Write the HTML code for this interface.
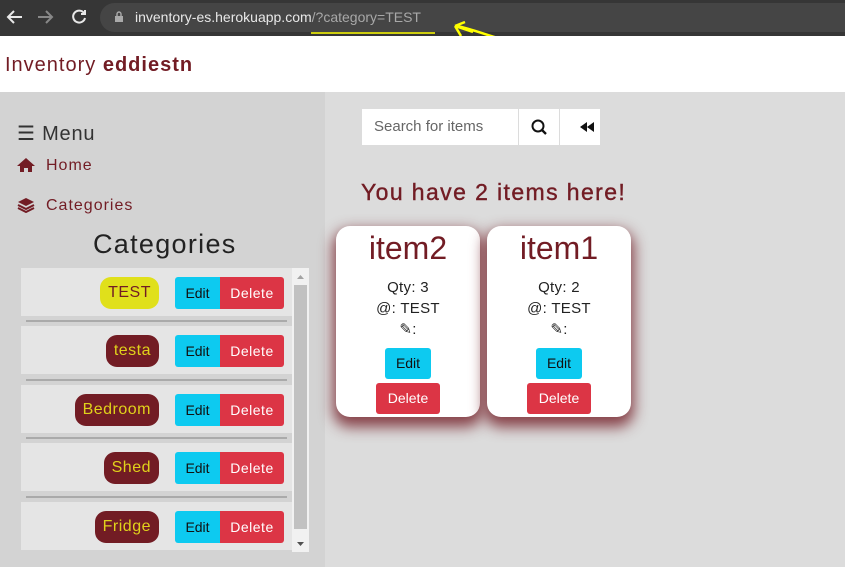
<!DOCTYPE html>
<html><head><style>
*{box-sizing:border-box;margin:0;padding:0}
body{width:845px;height:567px;overflow:hidden;font-family:"Liberation Sans",sans-serif;background:#dcdcdc;position:relative}
.abs{position:absolute}
.bar{left:0;top:0;width:845px;height:36px;background:#363636}
.pill{left:100px;top:3px;width:760px;height:29px;border-radius:15px;background:#454545}
.url{left:135px;top:9px;font-size:14px;color:#e8e8e8}
.url span{color:#a8a8a8}
.hdr{left:0;top:36px;width:845px;height:56px;background:#fff}
.side{left:0;top:92px;width:325px;height:475px;background:#d3d3d3}
.row{position:absolute;left:21px;width:271px;height:48px;background:#e5e5e5}
.hr{position:absolute;left:26px;width:261px;height:2px;background:#aaa}
.badge{position:absolute;right:133px;top:9px;height:32px;padding:0 8px;border-radius:11px;background:#721c24;color:#e0d21b;font-size:16px;line-height:32px;letter-spacing:.5px}
.ed{position:absolute;left:154px;top:9px;width:45px;height:32px;background:#0dcaf0;border-radius:3px 0 0 3px;font-size:14px;line-height:32px;text-align:center;color:#111}
.del{position:absolute;left:199px;top:9px;width:64px;height:32px;background:#dc3545;border-radius:0 3px 3px 0;font-size:14px;line-height:32px;text-align:center;color:#fff;letter-spacing:.5px}
.card{position:absolute;top:226px;width:144px;height:191px;background:#fff;border-radius:14px;box-shadow:0 7px 14px 3px rgba(114,28,36,.8);text-align:center}
.card h2{font-weight:normal;font-size:32px;color:#721c24;margin-top:2px;line-height:40px}
.card p{font-size:15px;color:#222;line-height:21px;letter-spacing:.3px}
.ce{display:inline-block;width:46px;height:31px;background:#0dcaf0;border-radius:3px;font-size:14px;line-height:31px;color:#111;margin-top:8px}
.cd{display:inline-block;width:64px;height:31px;background:#dc3545;border-radius:3px;font-size:14px;line-height:31px;color:#fff;margin-top:4px}
</style></head><body>
<div class="abs bar"></div>
<div class="abs pill"></div>
<svg class="abs" style="left:0;top:0" width="100" height="36"><g fill="none" stroke-width="2"><path d="M22 17H8M14 11l-6 6 6 6" stroke="#e8e8e8"/><path d="M38 17h14M46 11l6 6-6 6" stroke="#888"/><path d="M84 13a6 6 0 1 0 1 5" stroke="#e8e8e8"/><path d="M85 10v4h-4" stroke="#e8e8e8"/></g></svg>
<svg class="abs" style="left:114px;top:11px" width="10" height="12"><rect x="1" y="5" width="8" height="6" fill="#aaa"/><path d="M3 5V3a2 2 0 0 1 4 0v2" stroke="#aaa" fill="none" stroke-width="1.4"/></svg>
<div class="abs url">inventory-es.herokuapp.com<span>/?category=TEST</span></div>
<svg class="abs" style="left:305px;top:14px" width="220" height="30"><path d="M6 19h124" stroke="#ffff00" stroke-width="1.5"/><path d="M150 12l18 6M150 12l10-4M150 12l6 10M152 12c20 4 40 14 60 16" stroke="#ffff00" stroke-width="2.5" fill="none"/></svg>
<div class="abs hdr"></div>
<div class="abs" style="left:5px;top:54px;font-size:20px;color:#721c24;letter-spacing:1px">Inventory <b>eddiestn</b></div>
<div class="abs side"></div>
<div class="abs" style="left:17px;top:121px;font-size:20px;color:#333;letter-spacing:.8px">☰ Menu</div>
<svg class="abs" style="left:17px;top:157px" width="18" height="16"><path d="M9 1L0 9h3v6h4v-4h4v4h4V9h3z" fill="#721c24"/></svg>
<div class="abs" style="left:46px;top:157px;font-size:16px;color:#721c24;letter-spacing:1px">Home</div>
<svg class="abs" style="left:17px;top:197px" width="18" height="16"><path d="M9 1l8 4-8 4-8-4z" fill="#721c24"/><path d="M1 8l8 4 8-4M1 11l8 4 8-4" stroke="#721c24" stroke-width="2" fill="none"/></svg>
<div class="abs" style="left:46px;top:197px;font-size:16px;color:#721c24;letter-spacing:1px">Categories</div>
<div class="abs" style="left:93px;top:229px;font-size:27px;color:#222;letter-spacing:1.3px">Categories</div>
<div class="row" style="top:268px"><div class="badge" style="background:#e0e01b;color:#721c24">TEST</div><div class="ed">Edit</div><div class="del">Delete</div></div>
<div class="hr" style="top:320px"></div>
<div class="row" style="top:326px"><div class="badge">testa</div><div class="ed">Edit</div><div class="del">Delete</div></div>
<div class="hr" style="top:379px"></div>
<div class="row" style="top:385px"><div class="badge">Bedroom</div><div class="ed">Edit</div><div class="del">Delete</div></div>
<div class="hr" style="top:437px"></div>
<div class="row" style="top:443px"><div class="badge">Shed</div><div class="ed">Edit</div><div class="del">Delete</div></div>
<div class="hr" style="top:496px"></div>
<div class="row" style="top:502px"><div class="badge">Fridge</div><div class="ed">Edit</div><div class="del">Delete</div></div>
<div class="abs" style="left:292px;top:268px;width:17px;height:284px;background:#f1f1f1"></div>
<div class="abs" style="left:294px;top:285px;width:13px;height:244px;background:#c1c1c1"></div>
<svg class="abs" style="left:292px;top:268px" width="17" height="284"><path d="M5 11l3.5-4 3.5 4z" fill="#a3a3a3"/><path d="M5 274l3.5 4 3.5-4z" fill="#505050"/></svg>
<div class="abs" style="left:362px;top:109px;width:156px;height:36px;background:#fff;font-size:15px;color:#666;line-height:36px;padding-left:12px">Search for items</div>
<div class="abs" style="left:519px;top:109px;width:40px;height:36px;background:#fff"></div>
<div class="abs" style="left:560px;top:109px;width:40px;height:36px;background:#fff"></div>
<svg class="abs" style="left:519px;top:109px" width="82" height="36"><circle cx="19" cy="17" r="5.5" stroke="#111" stroke-width="2" fill="none"/><path d="M23 21l4 4" stroke="#111" stroke-width="2.3"/><path d="M61 18l7-5v10zM68 18l7-5v10z" fill="#111"/></svg>
<div class="abs" style="left:361px;top:179px;font-size:23px;color:#721c24;letter-spacing:1.4px;-webkit-text-stroke:.4px #721c24">You have 2 items here!</div>
<div class="card" style="left:336px"><h2>item2</h2><p style="margin-top:9px">Qty: 3</p><p>@: TEST</p><p>✎:</p><div class="ce">Edit</div><br><div class="cd">Delete</div></div>
<div class="card" style="left:487px"><h2>item1</h2><p style="margin-top:9px">Qty: 2</p><p>@: TEST</p><p>✎:</p><div class="ce">Edit</div><br><div class="cd">Delete</div></div>
</body></html>
